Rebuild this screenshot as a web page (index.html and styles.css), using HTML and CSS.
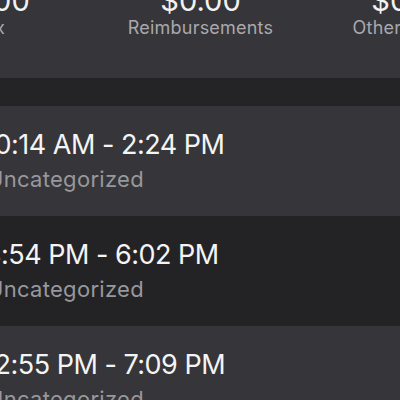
FILE: index.html
```html
<!DOCTYPE html>
<html>
<head>
<meta charset="utf-8">
<link rel="stylesheet" href="styles.css">
</head>
<body>
<div class="page">
  <div class="summary">
    <div class="stat"><div class="value">$0.00</div><div class="label">Tax</div></div>
    <div class="stat"><div class="value">$0.00</div><div class="label">Reimbursements</div></div>
    <div class="stat"><div class="value">$0.00</div><div class="label">Other Income</div></div>
  </div>
  <div class="band"></div>
  <div class="list">
    <div class="row"><div class="time">10:14 AM - 2:24 PM</div><div class="cat">Uncategorized</div></div>
    <div class="row alt"><div class="time">4:54 PM - 6:02 PM</div><div class="cat">Uncategorized</div></div>
    <div class="row"><div class="time">12:55 PM - 7:09 PM</div><div class="cat">Uncategorized</div></div>
  </div>
</div>
</body>
</html>
```
FILE: styles.css
```css
html, body {
  margin: 0;
  padding: 0;
  width: 400px;
  height: 400px;
  overflow: hidden;
  background: #363539;
  font-family: "Inter", "Liberation Sans", sans-serif;
}
.page {
  width: 400px;
  overflow: hidden;
}
.summary {
  height: 92px;
  background: #363539;
  display: flex;
  margin-left: -116px;
  margin-top: -14px;
}
.stat {
  flex: 0 0 211px;
  display: flex;
  flex-direction: column;
  align-items: center;
}
.value {
  color: #f2f2f2;
  font-size: 29px;
  line-height: 30px;
}
.label {
  color: #a9a9ad;
  font-size: 18px;
  line-height: 22px;
  letter-spacing: 0.2px;
  margin-top: 1px;
}
.band {
  height: 28px;
  background: #242427;
}
.list {
  display: flex;
  flex-direction: column;
}
.row {
  height: 110px;
  background: #363539;
  padding: 22px 0 0 0;
  box-sizing: border-box;
  margin-left: -16px;
}
.row.alt { background: #232326; }
.time {
  color: #f4f4f4;
  font-size: 27px;
  line-height: 34px;
  letter-spacing: -0.5px;
}
.cat {
  color: #98989c;
  font-size: 22px;
  line-height: 26px;
  letter-spacing: 0.3px;
  margin-top: 4px;
  padding-left: 3px;
}
```
